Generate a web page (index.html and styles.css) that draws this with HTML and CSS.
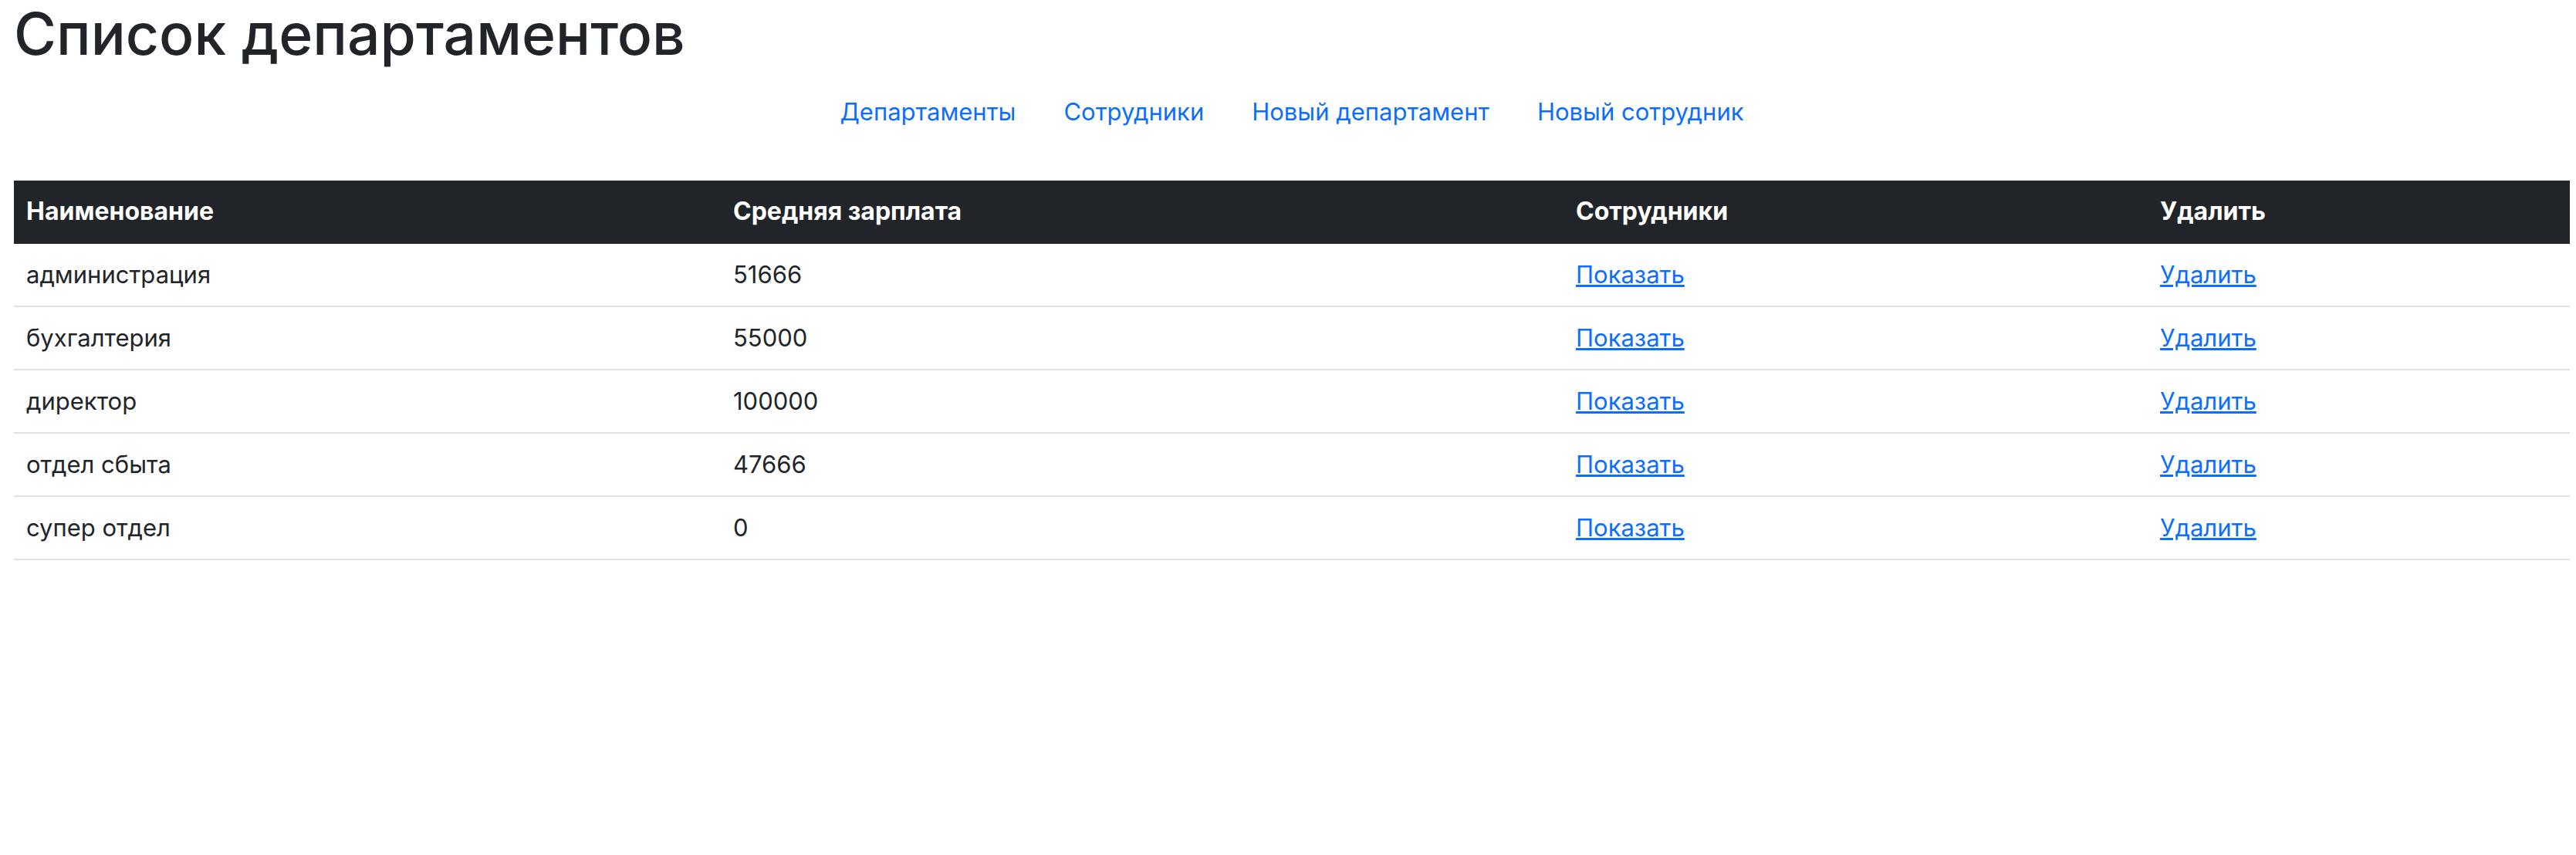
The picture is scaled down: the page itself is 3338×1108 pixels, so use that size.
FILE: index.html
```html
<!DOCTYPE html>
<html lang="ru">
<head>
<meta charset="utf-8">
<title>Список департаментов</title>
<link rel="stylesheet" href="styles.css">
</head>
<body>
<h1 class="title">Список департаментов</h1>
<nav class="nav">
  <a class="nav-link" href="#">Департаменты</a>
  <a class="nav-link" href="#">Сотрудники</a>
  <a class="nav-link" href="#">Новый департамент</a>
  <a class="nav-link" href="#">Новый сотрудник</a>
</nav>
<table class="table">
  <thead>
    <tr>
      <th class="c1">Наименование</th>
      <th class="c2">Средняя зарплата</th>
      <th class="c3">Сотрудники</th>
      <th class="c4">Удалить</th>
    </tr>
  </thead>
  <tbody>
    <tr><td>администрация</td><td>51666</td><td><a href="#">Показать</a></td><td><a href="#">Удалить</a></td></tr>
    <tr><td>бухгалтерия</td><td>55000</td><td><a href="#">Показать</a></td><td><a href="#">Удалить</a></td></tr>
    <tr><td>директор</td><td>100000</td><td><a href="#">Показать</a></td><td><a href="#">Удалить</a></td></tr>
    <tr><td>отдел сбыта</td><td>47666</td><td><a href="#">Показать</a></td><td><a href="#">Удалить</a></td></tr>
    <tr><td>супер отдел</td><td>0</td><td><a href="#">Показать</a></td><td><a href="#">Удалить</a></td></tr>
  </tbody>
</table>
</body>
</html>
```

FILE: styles.css
```css
html, body {
  margin: 0;
  background: #fff;
}
body {
  padding: 0 8px 0 18px;
  font-family: Inter, "Liberation Sans", sans-serif;
  font-size: 31px;
  color: #212529;
}
.title {
  margin: 0;
  font-size: 75px;
  font-weight: 500;
  line-height: 88px;
}
.nav {
  display: flex;
  justify-content: center;
  margin-top: 25px;
}
.nav-link {
  color: #0d6efd;
  text-decoration: none;
  padding: 14px 31px;
  line-height: 36px;
}
.table {
  width: 100%;
  border-collapse: collapse;
  margin-top: 57px;
  table-layout: fixed;
}
.table th, .table td {
  text-align: left;
  padding: 22px 16px;
  line-height: 36px;
  border-bottom: 2px solid #dee2e6;
}
.table thead th {
  background: #212529;
  color: #fff;
  font-weight: 700;
  font-size: 32px;
  border-bottom-color: #212529;
}
.c1 { width: 884px; }
.c2 { width: 1060px; }
.c3 { width: 725px; }
.table td a {
  color: #0d6efd;
  text-decoration: underline;
}
```
